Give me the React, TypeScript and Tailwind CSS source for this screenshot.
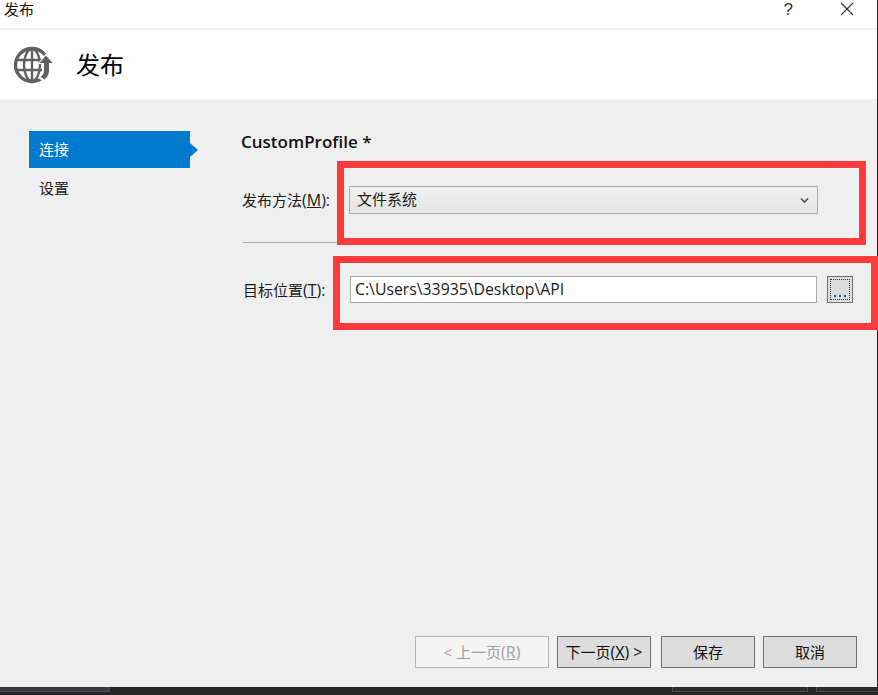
import React from "react";

const cjk = "font-['Segoe_UI','Open_Sans','Noto_Sans_CJK_SC',sans-serif]";

function GlobeIcon() {
  return (
    <svg width="42" height="38" viewBox="0 0 42 38" fill="none" className="ml-[13px] mt-[16px] shrink-0">
      <circle cx="19" cy="19" r="16.500" stroke="#606060" strokeWidth="3.400" />
      <ellipse cx="19" cy="19" rx="8" ry="16" stroke="#606060" strokeWidth="2.400" />
      <path d="M4 14H34M4 24H34M19 3V35" stroke="#606060" strokeWidth="2.400" />
      <path d="M33 7.500L42 18H38V25C38 29 36 33 32 36L25 32C28 30 29 28 29 25V18H24.500Z" fill="#ffffff" />
      <path d="M33 9.500L39.500 17H36V25C36 28 34.500 31 31.500 33.500L27.500 31C30 29 31 27 31 25V17H26.500Z" fill="#606060" />
    </svg>
  );
}

function DialogButton({ children, disabled, width }: { children: React.ReactNode; disabled?: boolean; width: string }) {
  return (
    <div
      className={`${width} h-[32px] flex items-center justify-center border text-[15px] whitespace-pre ${
        disabled ? "border-[#b4b4b4] bg-[#f4f4f4] text-[#a0a0a0]" : "border-[#707070] bg-[#dddddd] text-[#111111]"
      }`}
    >
      {children}
    </div>
  );
}

export default function App() {
  return (
    <div className={`relative w-[878px] h-[695px] overflow-hidden flex flex-col bg-[#252526] ${cjk} text-[#1a1a1a]`}>
      <div className="w-[877px] h-[687px] flex flex-col shrink-0 bg-[#efefef]">
        {/* title bar */}
        <div className="h-[28px] shrink-0 bg-white flex items-start justify-between">
          <span className="ml-[4px] text-[15px] leading-[18px] text-[#111111]">发布</span>
          <div className="flex items-start">
            <span className="font-['Liberation_Sans',sans-serif] text-[17px] text-[#333333] mr-[47px] leading-[20px]">?</span>
            <svg width="14" height="14" viewBox="0 0 14 14" className="mr-[23px] mt-[2px]">
              <path d="M1 1L13 13M13 1L1 13" stroke="#333333" strokeWidth="1.100" />
            </svg>
          </div>
        </div>
        {/* header */}
        <div className="h-[69px] mt-[2px] shrink-0 bg-white flex">
          <GlobeIcon />
          <span className="ml-[21px] mt-[19px] text-[24px] leading-[32px] text-black">发布</span>
        </div>
        {/* body */}
        <div className="flex-1 flex min-h-0">
          {/* sidebar */}
          <div className="w-[198px] shrink-0 pl-[29px] pt-[32px] flex flex-col">
            <div className="flex items-center">
              <div className="w-[161px] h-[37px] bg-[#007acc] text-white text-[15px] pl-[10px] flex items-center">连接</div>
              <div className="w-0 h-0 border-y-[7px] border-y-transparent border-l-[8px] border-l-[#007acc]" />
            </div>
            <div className="mt-[10px] pl-[10px] text-[15px] leading-[20px] text-[#222222]">设置</div>
          </div>
          {/* main */}
          <div className="flex-1 min-w-0 flex flex-col">
            <div className="ml-[43px] mt-[32px] text-[17px] leading-[22px] font-semibold text-[#111111]">CustomProfile *</div>
            <div className="flex mt-[33px] ml-[44px] items-center h-[28px]">
              <span className="w-[107px] text-[15px] leading-[20px] whitespace-nowrap">
                发布方法<span className="text-[16px]">(<span className="underline">M</span>):</span>
              </span>
              <div className="w-[469px] h-[28px] border border-[#acacac] bg-gradient-to-b from-[#f0f0f0] to-[#e5e5e5] flex items-center justify-between pl-[7px] pr-[8px] text-[15px]">
                <span className="-mt-[2px]">文件系统</span>
                <svg width="9" height="7" viewBox="0 0 9 7">
                  <path d="M1 1.500L4.500 5L8 1.500" stroke="#555555" strokeWidth="1.700" fill="none" />
                </svg>
              </div>
            </div>
            <div className="ml-[45px] mt-[28px] w-[300px] h-px bg-[#a8a8a8]" />
            <div className="flex mt-[33px] ml-[45px] items-center h-[27px]">
              <span className="w-[107px] text-[15px] leading-[20px] whitespace-nowrap">
                目标位置<span className="text-[16px]">(<span className="underline">T</span>):</span>
              </span>
              <div className="w-[467px] h-[27px] border border-[#acacac] bg-white flex items-center pl-[4px] text-[15.800px] whitespace-nowrap">
                C:\Users\33935\Desktop\API
              </div>
              <div className="ml-[10px] w-[26px] h-[27px] border border-[#707070] bg-[#dddddd] p-[2px]">
                <div className="w-full h-full border border-dotted border-[#333333] flex items-end justify-center pb-[2px] gap-[3px]">
                  <div className="w-[2px] h-[2px] bg-[#0a5a9c]" />
                  <div className="w-[2px] h-[2px] bg-[#0a5a9c]" />
                  <div className="w-[2px] h-[2px] bg-[#0a5a9c]" />
                </div>
              </div>
            </div>
            <div className="mt-auto mb-[19px] flex ml-[217px]">
              <DialogButton disabled width="w-[134px]">
                &lt; 上一页<span className="text-[16px]">(<span className="underline">R</span>)</span>
              </DialogButton>
              <div className="ml-[8px]">
                <DialogButton width="w-[94px]">
                  下一页<span className="text-[16px]">(<span className="underline">X</span>) &gt;</span>
                </DialogButton>
              </div>
              <div className="ml-[10px]">
                <DialogButton width="w-[94px]">保存</DialogButton>
              </div>
              <div className="ml-[8px]">
                <DialogButton width="w-[94px]">取消</DialogButton>
              </div>
            </div>
          </div>
        </div>
      </div>
      {/* taskbar remnant */}
      <div className="flex-1 flex items-start">
        <div className="w-[110px] h-[5px] bg-[#3a3a40] border-r border-b border-[#4a4a50]" />
        <div className="ml-[562px] w-[136px] h-[5px] bg-[#2a2a2c] border-x border-b border-[#4a4a4d]" />
        <div className="ml-[8px] w-[62px] h-[5px] bg-[#2a2a2c] border-l border-b border-[#4a4a4d]" />
      </div>
      {/* annotation boxes */}
      <div className="absolute left-[337px] top-[161px] w-[529px] h-[84px] border-[7px] border-[#ff3a3a]" />
      <div className="absolute left-[333px] top-[256px] w-[545px] h-[74px] border-[7px] border-[#ff3a3a]" />
    </div>
  );
}
